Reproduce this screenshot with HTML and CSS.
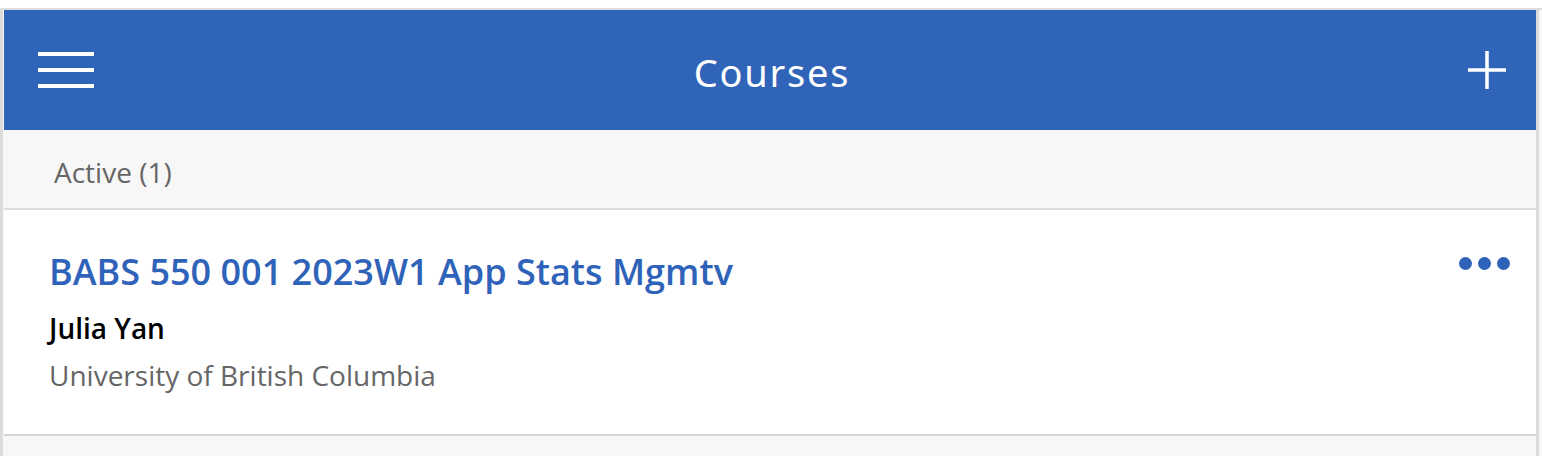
FILE: index.html
```html
<!DOCTYPE html>
<html>
<head>
<meta charset="utf-8">
<link rel="stylesheet" href="styles.css">
</head>
<body>
<div class="page">
  <div class="frame">
    <header class="topbar">
      <button class="icon-btn menu" aria-label="Menu">
        <span></span><span></span><span></span>
      </button>
      <h1 class="title">Courses</h1>
      <button class="icon-btn add" aria-label="Add">
        <svg width="38" height="38" viewBox="0 0 38 38"><path d="M19 0V38M0 19H38" stroke="#fff" stroke-width="3.5" fill="none"/></svg>
      </button>
    </header>
    <div class="section-head">Active (1)</div>
    <div class="course">
      <div class="course-info">
        <a class="course-name" href="#">BABS 550 001 2023W1 App Stats Mgmtv</a>
        <div class="course-teacher">Julia Yan</div>
        <div class="course-school">University of British Columbia</div>
      </div>
      <button class="more" aria-label="More"><i></i><i></i><i></i></button>
    </div>
    <div class="rest"></div>
  </div>
</div>
</body>
</html>
```

FILE: styles.css
```css
* { box-sizing: border-box; }
html, body { margin: 0; padding: 0; }
body {
  background: #ffffff;
  font-family: "Open Sans", "Liberation Sans", sans-serif;
  height: 456px;
  overflow: hidden;
}
.page {
  padding-top: 8px;
  height: 456px;
  background: linear-gradient(#fff, #fff) top / 100% 8px no-repeat, #f4f4f4;
}
.frame {
  border-top: 2px solid #dcdcdc;
  width: 1542px;
  height: 448px;
  display: flex;
  flex-direction: column;
  padding-left: 4px;
  padding-right: 6px;
  background:
    linear-gradient(#dcdcdc, #dcdcdc) left top / 3px 100% no-repeat,
    linear-gradient(#dcdcdc, #dcdcdc) 1536px 0 / 3px 100% no-repeat,
    #f7f7f7;
}
.topbar {
  height: 120px;
  background: #3064b9;
  display: grid;
  grid-template-columns: 1fr auto 1fr;
  align-items: center;
  padding: 0 30px 0 34px;
  flex: none;
}
.icon-btn {
  background: none;
  border: 0;
  padding: 0;
  cursor: pointer;
}
.menu {
  width: 56px;
  height: 36px;
  display: flex;
  flex-direction: column;
  justify-content: space-between;
}
.menu span {
  display: block;
  height: 4px;
  background: #fff;
}
.add { width: 38px; height: 38px; display: flex; justify-self: end; }
.title {
  margin: 4px 0 0;
  color: #fff;
  font-family: "Noto Sans", sans-serif;
  font-weight: 400;
  font-size: 38px;
  letter-spacing: 1.8px;
  line-height: 40px;
}
.section-head {
  height: 80px;
  flex: none;
  border-bottom: 2px solid #dcdcdc;
  padding: 22px 0 0 50px;
  font-size: 28px;
  line-height: 40px;
  color: #666;
}
.course {
  height: 226px;
  flex: none;
  background: #fff;
  border-bottom: 2px solid #d6d6d6;
  display: flex;
  justify-content: space-between;
  padding: 38px 26px 0 45px;
}
.course-info { display: flex; flex-direction: column; }
.course-name {
  font-size: 36px;
  font-weight: 600;
  line-height: 48px;
  color: #2f63b9;
  text-decoration: none;
}
.course-teacher {
  margin-top: 12px;
  font-size: 28px;
  font-weight: 600;
  line-height: 40px;
  color: #000;
}
.course-school {
  margin-top: 7px;
  font-size: 28px;
  line-height: 40px;
  color: #666;
}
.more {
  background: none;
  border: 0;
  padding: 0;
  margin-top: 9px;
  height: 13px;
  display: flex;
  gap: 6px;
  cursor: pointer;
}
.more i {
  width: 13px;
  height: 13px;
  border-radius: 50%;
  background: #2f63b9;
}
.rest { flex: 1; }
```
